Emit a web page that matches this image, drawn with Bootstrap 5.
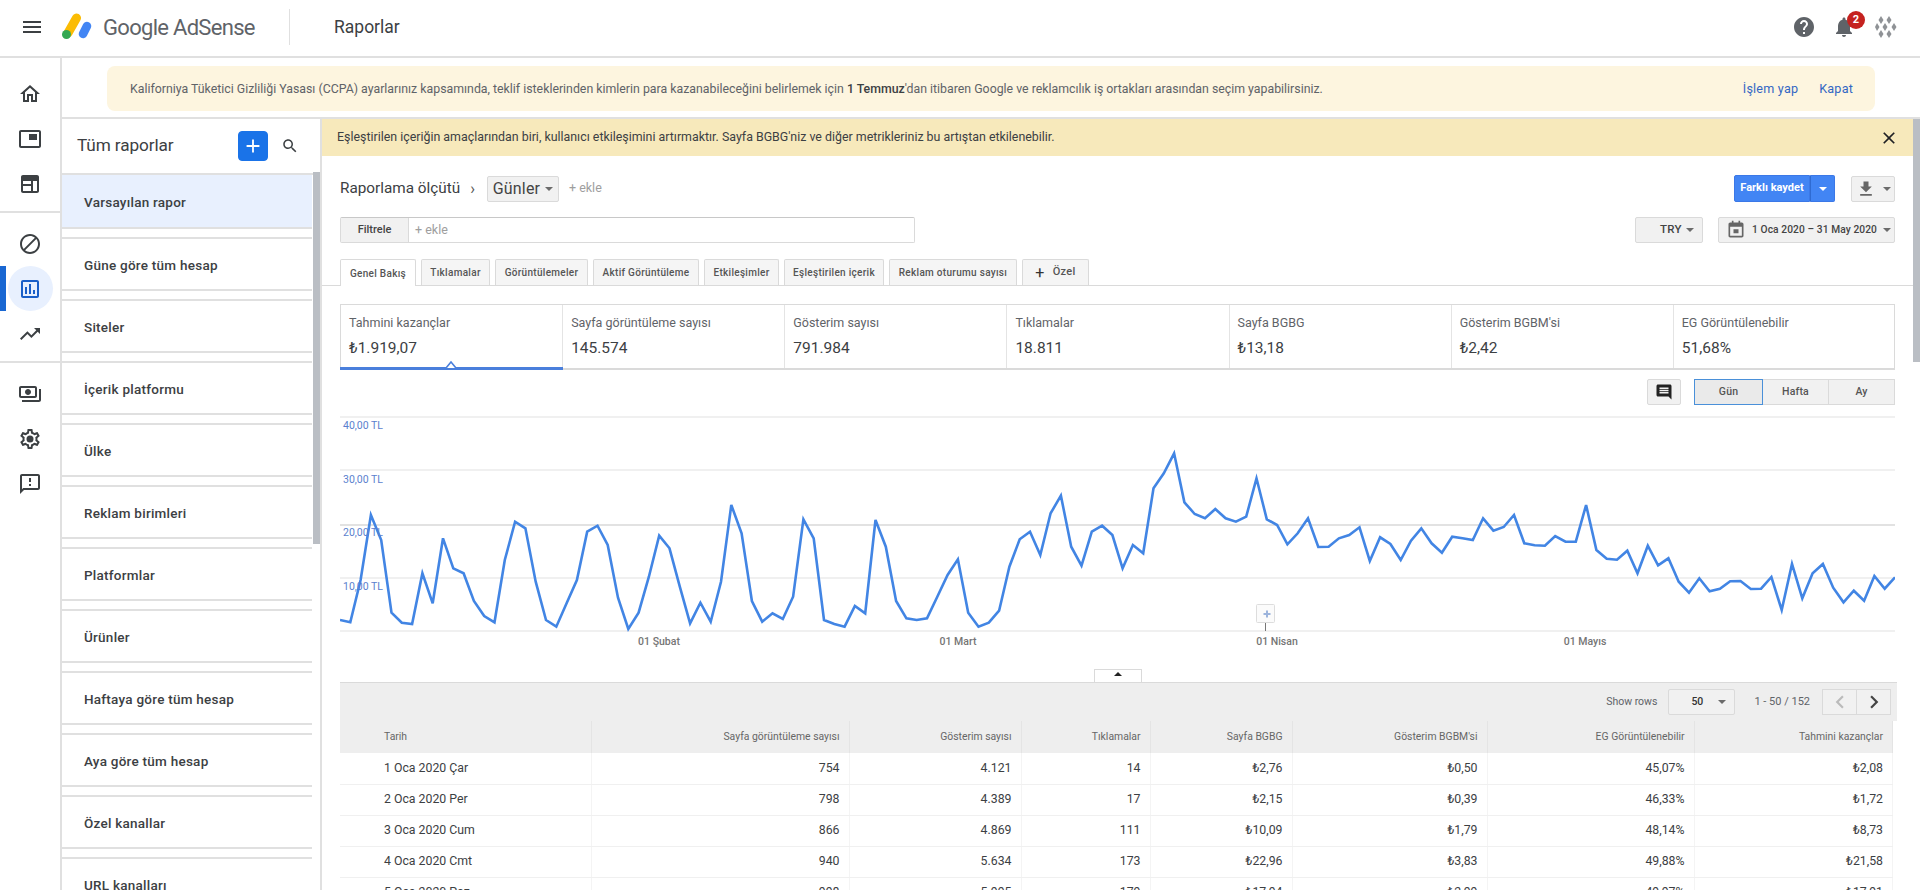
<!DOCTYPE html>
<html lang="tr">
<head>
  <meta charset="UTF-8">
  <meta name="viewport" content="width=device-width, initial-scale=1">
  <title>Google AdSense - Raporlar</title>

  <link href="https://cdn.jsdelivr.net/npm/bootstrap@5.3.2/dist/css/bootstrap.min.css" rel="stylesheet">

  <style>
    html, body { height: 890px; overflow: hidden; }
    body { font-family: Roboto, "Liberation Sans", sans-serif; color: #3c4043; background: #fff; font-size: 13px; }
    svg { display: block; fill: currentColor; }

    .top-bar { height: 58px; padding: 0 23px 2px 20px; border-bottom: 2px solid #e0e0e0; flex-wrap: nowrap; justify-content: flex-start; }
    .menu-ico { width: 24px; height: 24px; color: #3c4043; }
    .ad-logo { width: 30px; height: 30px; margin-left: 18px; fill: none; margin-top: 1px; }
    .ad-name { font-size: 22px; color: #5f6368; margin-left: 11px; letter-spacing: -.7px; white-space: nowrap; width: 164px; }
    .top-sep { width: 1px; height: 36px; background: #e0e0e0; margin: 0 44px 0 22px; }
    .top-title { font-size: 17.5px; color: #3c4043; }
    .help-ico { width: 24px; height: 24px; color: #5f6368; }
    .bell-box { margin-left: 16px; position: relative; color: #5f6368; }
    .bell-ico { width: 24px; height: 24px; }
    .bell-count { position: absolute; top: -4px; right: -9px; width: 18px; height: 18px; border-radius: 50%; background: #c5221f; color: #fff; font-size: 11px; font-weight: 700; line-height: 18px; text-align: center; }
    .avatar-ico { width: 22px; height: 22px; margin-left: 19px; color: #8f9296; }

    .page-body { height: 832px; }
    .side-rail { width: 62px; flex: none; border-right: 2px solid #e0e0e0; }
    .rail-group { padding: 13px 0 5px; border-bottom: 2px solid #e0e0e0; }
    .rail-group + .rail-group { padding-top: 8px; }
    .rail-group:last-child { border-bottom: 0; }
    .rail-item { height: 45px; display: flex; align-items: center; justify-content: center; color: #3c4043; position: relative; width: 60px; }
    .rail-item svg { width: 24px; height: 24px; }
    .rail-item.is-on { color: #1a5fc8; }
    .rail-item.is-on::before { content: ""; position: absolute; left: 0; top: 0; bottom: 0; width: 6px; background: #1967d2; }
    .rail-item.is-on::after { content: ""; position: absolute; left: 8px; top: 0; width: 45px; height: 45px; border-radius: 50%; background: #e8f0fe; z-index: 0; }
    .rail-item.is-on svg { position: relative; z-index: 1; }

    .body-right { min-width: 0; }
    .ccpa-wrap { height: 61px; padding: 8px 45px 0; border-bottom: 2px solid #e0e0e0; flex: none; }
    .ccpa-box { height: 45px; background: #fdf5df; border-radius: 8px; padding: 1px 22px 0 23px; font-size: 12.33px; color: #5f6368; }
    .ccpa-box b { font-weight: 500; color: #3c4043; }
    .ccpa-link { color: #3367c4; font-size: 12.6px; letter-spacing: .2px; text-decoration: none; margin-left: 21px; }
    .ccpa-link:first-of-type { margin-left: 0; }

    .work-area { min-height: 0; }
    .report-panel { width: 260px; flex: none; border-right: 2px solid #e0e0e0; position: relative; overflow: hidden; }
    .panel-head { height: 56px; padding: 0 21px 0 15px; border-bottom: 2px solid #e0e0e0; }
    .panel-title { font-size: 17.2px; color: #3c4043; letter-spacing: -.1px; }
    .add-btn { width: 30px; height: 30px; padding: 0; background: #1a73e8; border-color: #1a73e8; color: #fff; border-radius: 4px; display: flex; align-items: center; justify-content: center; margin-left: auto; }
    .add-btn svg { width: 22px; height: 22px; }
    .search-ico { width: 18px; height: 18px; margin-left: 13px; color: #3c4043; }
    .report-list { padding-right: 8px; }
    .report-row { height: 54px; padding: 3px 22px 0; margin-bottom: 8px; display: flex; align-items: center; border-bottom: 2px solid #e0e0e0; border-top: 2px solid #e0e0e0; font-size: 13.5px; font-weight: 500; color: #3c4043; letter-spacing: .25px; }
    .report-row:first-child { background: #e8f0fe; border-top: 0; }
    .panel-scroll { position: absolute; right: 0; top: 53px; width: 7px; height: 372px; background: #babec4; }

    .report-main { min-width: 0; position: relative; overflow: hidden; }
    .main-scroll { position: absolute; top: 0; right: 0; width: 7px; height: 243px; background: #babec4; }
    .tip-bar { height: 37px; background: #f7e9bb; margin-right: 7px; padding: 0 14px 0 15px; font-size: 12.4px; color: #3c4043; }
    .tip-bar svg { width: 20px; height: 20px; margin-left: auto; color: #202124; }

    .report-inner { padding: 19px 25px 0 18px; }
    .gray-btn { background: #f1f1f1; border: 1px solid #dadada; border-radius: 2px; color: #444; font-size: 11px; font-weight: 500; padding: 0; height: 26px; display: inline-flex; align-items: center; justify-content: center; letter-spacing: .2px; white-space: nowrap; }
    .gray-btn:hover { background: #f1f1f1; border-color: #dadada; color: #444; }
    .caret-mini { width: 0; height: 0; border: 4px solid transparent; border-top-color: #6b6b6b; border-bottom: 0; display: inline-block; }
    .by-label { font-size: 15.3px; color: #3c4043; }
    .by-chevron { font-size: 16px; color: #555; margin: 0 12px 0 10px; line-height: 1; }
    .days-btn { width: 72px; font-size: 16px; font-weight: 400; gap: 5px; color: #444; }
    .add-hint { color: #9e9e9e; font-size: 12.5px; margin-left: 10px; }
    .save-group { margin-left: auto; }
    .save-main { width: 76px; height: 27px; background: #4285f4; color: #fff; font-size: 11px; font-weight: 700; border: 1px solid #3b78e7; border-radius: 2px 0 0 2px; padding: 0; white-space: nowrap; }
    .save-drop { width: 25px; height: 27px; background: #4285f4; border: 1px solid #3b78e7; border-left-color: #2f6bd2; border-radius: 0 2px 2px 0; padding: 0; display: flex; align-items: center; justify-content: center; }
    .save-drop .caret-mini { border-top-color: #fff; }
    .down-btn { width: 44px; margin-left: 16px; gap: 7px; }
    .down-btn svg { width: 20px; height: 20px; color: #666; }

    .filter-row { margin-top: 15px; }
    .filter-box { width: 575px; height: 26px; border: 1px solid #dadada; border-top-color: #c8c8c8; border-radius: 2px; }
    .filter-name { width: 68px; background: #f1f1f1; border-right: 1px solid #dadada; font-size: 11px; font-weight: 500; color: #444; }
    .filter-add { padding-left: 6px; color: #9e9e9e; font-size: 12.5px; }
    .cur-btn { width: 68px; margin-left: auto; padding: 0 8px 0 24px; justify-content: space-between; font-size: 11.5px; }
    .date-btn { width: 177px; margin-left: 15px; padding-left: 7px; gap: 6px; justify-content: flex-start; font-size: 10.2px; letter-spacing: .1px; font-weight: 500; }
    .date-btn svg { width: 20px; height: 20px; color: #666; }

    .tab-strip { height: 26px; margin: 16px -25px 0 -18px; padding-left: 18px; border-bottom: 1px solid #dadada; gap: 5px; box-sizing: content-box; }
    .tab-item { height: 26px; background: #f5f5f5; border: 1px solid #dadada; border-bottom: 0; border-radius: 2px 2px 0 0; font-size: 10px; font-weight: 500; color: #555; letter-spacing: .3px; display: flex; align-items: center; justify-content: center; }
    .tab-item.is-on { background: #fff; height: 27px; margin-bottom: -1px; }
    .tw1 { width: 76px; } .tw2 { width: 69px; } .tw3 { width: 93px; } .tw4 { width: 106px; } .tw5 { width: 75px; } .tw6 { width: 100px; } .tw7 { width: 128px; } .tw8 { width: 67px; gap: 8px; font-size: 11px; }
    .plus-glyph { font-size: 16px; color: #333; font-weight: 400; line-height: 1; }

    .score-strip { margin-top: 18px; height: 66px; border: 1px solid #dadada; border-bottom-width: 2px; width: 1555px; }
    .score-cell { width: 222.14px; flex: none; padding: 9px 8px 0 8px; border-right: 1px solid #e4e4e4; position: relative; }
    .score-cell:last-child { border-right: 0; }
    .score-cell.is-on::after { content: ""; position: absolute; left: -1px; right: -1px; bottom: -2px; height: 3px; background: #4a7fdc; }
    .score-notch { position: absolute; left: 105px; bottom: 0; width: 10px; height: 10px; fill: #fff; stroke: #4a7fdc; stroke-width: 1.6; z-index: 1; }
    .score-name { font-size: 12.5px; color: #5f6368; line-height: 18px; }
    .score-val { font-size: 15.5px; color: #3c4043; margin-top: 6px; line-height: 20px; }

    .range-row { margin-top: 9px; height: 26px; width: 1555px; justify-content: flex-end; }
    .note-btn { width: 34px; margin-right: 14px; }
    .note-btn svg { width: 18px; height: 18px; color: #222; }
    .range-btn { width: 67px; border-radius: 0; margin-left: -1px; font-size: 10.5px; color: #555; }
    .range-btn.is-on { background: #eaeaea; border-color: #4a90d9; position: relative; z-index: 1; width: 69px; }

    .chart-svg { margin-top: 11px; width: 1555px; height: 236px; }
    .chart-svg text { font-family: Roboto, "Liberation Sans", sans-serif; }

    .collapse-tab { width: 48px; height: 13px; margin: 17px 0 0 754px; background: #fff; border: 1px solid #dadada; border-bottom: 0; display: flex; justify-content: center; padding-top: 2px; }
    .collapse-tab i { width: 0; height: 0; border: 4px solid transparent; border-bottom: 4px solid #222; border-top: 0; display: block; }
    .data-wrap { width: 1557px; border-top: 1px solid #dadada; }
    .tool-row { height: 38px; background: #eee; padding-right: 6px; font-size: 10.5px; color: #5f6368; }
    .rows-select { width: 67px; height: 26px; background: #f1f1f1; border: 1px solid #dadada; border-radius: 2px; margin-left: 11px; padding: 0 8px 0 22px; font-weight: 500; color: #333; justify-content: space-between; }
    .pager-text { margin-left: 19px; font-size: 11px; }
    .pager-group { margin-left: 13px; }
    .pager-btn { width: 35px; height: 26px; background: #f1f1f1; border: 1px solid #dadada; display: flex; align-items: center; justify-content: center; margin-left: -1px; color: #444; }
    .pager-btn svg { width: 26px; height: 26px; }
    .pager-btn.is-off { color: #bbb; }

    .data-table { table-layout: fixed; width: 1553px; margin: 0; font-size: 12.3px; color: #3c4043; }
    .data-table > :not(caption) > * > * { padding: 0 9px; height: 31px; vertical-align: middle; border-bottom: 1px solid #f0f0f0; border-right: 1px solid #f4f4f4; text-align: right; background: transparent; color: #3c4043; box-shadow: none; }
    .data-table th { background: #eee !important; font-size: 10.4px; font-weight: 400; height: 32px !important; color: #666 !important; border-right-color: #e4e4e4 !important; border-bottom: 0 !important; }
    .data-table .day-cell { text-align: left; padding-left: 44px; }
    .cw1 { width: 251px; } .cw2 { width: 258px; } .cw3 { width: 172px; } .cw4 { width: 129px; } .cw5 { width: 142px; } .cw6 { width: 195px; } .cw7 { width: 207px; }
  </style>
</head>

<body>

  <nav class="navbar top-bar bg-white">
    <svg class="menu-ico" viewBox="0 0 24 24"><path d="M3 18h18v-2H3v2zm0-5h18v-2H3v2zm0-7v2h18V6H3z"/></svg>
    <svg class="ad-logo" viewBox="0 0 30 30">
      <line x1="6" y1="20" x2="14.5" y2="5" stroke="#fbbc04" stroke-width="9" stroke-linecap="round"/>
      <line x1="21" y1="21" x2="25" y2="13" stroke="#4285f4" stroke-width="8.5" stroke-linecap="round"/>
      <circle cx="4.5" cy="21.5" r="4.5" fill="#34a853"/>
    </svg>
    <span class="ad-name">Google AdSense</span>
    <span class="top-sep"></span>
    <span class="top-title">Raporlar</span>
    <div class="ms-auto d-flex align-items-center">
      <svg class="help-ico" viewBox="0 0 24 24"><path d="M12 2C6.48 2 2 6.48 2 12s4.48 10 10 10 10-4.48 10-10S17.52 2 12 2zm1 17h-2v-2h2v2zm2.07-7.75l-.9.92C13.45 12.9 13 13.5 13 15h-2v-.5c0-1.1.45-2.1 1.17-2.83l1.24-1.26c.37-.36.59-.86.59-1.41 0-1.1-.9-2-2-2s-2 .9-2 2H8c0-2.21 1.79-4 4-4s4 1.79 4 4c0 .88-.36 1.68-.93 2.25z"/></svg>
      <div class="bell-box">
        <svg class="bell-ico" viewBox="0 0 24 24"><path d="M12 22c1.1 0 2-.9 2-2h-4c0 1.1.89 2 2 2zm6-6v-5c0-3.07-1.64-5.64-4.5-6.32V4c0-.83-.67-1.5-1.5-1.5s-1.5.67-1.5 1.5v.68C7.63 5.36 6 7.92 6 11v5l-2 2v1h16v-1l-2-2z"/></svg>
        <span class="bell-count">2</span>
      </div>
      <svg class="avatar-ico" viewBox="0 0 22 22">
        <path d="M6 0l2.5 4L6 8 3.5 4zM14 0l2.5 4L14 8l-2.5-4zM2 7l2.5 4L2 15l-2-4zM10 7l2.5 4L10 15l-2.5-4zM19 7l2.5 4L19 15l-2.5-4zM6 14l2.5 4L6 22l-2.5-4zM14 14l2.5 4L14 22l-2.5-4z"/>
      </svg>
    </div>
  </nav>

  <div class="d-flex page-body">
    <aside class="side-rail">
      <div class="rail-group">
        <div class="rail-item"><svg viewBox="0 0 24 24"><path d="M12 5.69l5 4.5V18h-2v-6H9v6H7v-7.81l5-4.5M12 3L2 12h3v8h6v-6h2v6h6v-8h3L12 3z"/></svg></div>
        <div class="rail-item"><svg viewBox="0 0 24 24"><path d="M19 7h-8v6h8V7zm2-4H3c-1.1 0-2 .9-2 2v14c0 1.1.9 1.98 2 1.98h18c1.1 0 2-.88 2-1.98V5c0-1.1-.9-2-2-2zm0 16.01H3V4.98h18v14.03z"/></svg></div>
        <div class="rail-item"><svg viewBox="0 0 24 24"><path d="M19 3H5c-1.1 0-2 .9-2 2v14c0 1.1.9 2 2 2h14c1.1 0 2-.9 2-2V5c0-1.1-.9-2-2-2zM5 19v-5h8v5H5zm8-7H5V9h8v3zm6 7h-4V9h4v10z"/></svg></div>
      </div>
      <div class="rail-group">
        <div class="rail-item"><svg viewBox="0 0 24 24"><path d="M12 2C6.48 2 2 6.48 2 12s4.48 10 10 10 10-4.48 10-10S17.52 2 12 2zM4 12c0-4.42 3.58-8 8-8 1.85 0 3.55.63 4.9 1.69L5.69 16.9C4.63 15.55 4 13.85 4 12zm8 8c-1.85 0-3.55-.63-4.9-1.69L18.31 7.1C19.37 8.45 20 10.15 20 12c0 4.42-3.58 8-8 8z"/></svg></div>
        <div class="rail-item is-on"><svg viewBox="0 0 24 24"><path d="M19 3H5c-1.1 0-2 .9-2 2v14c0 1.1.9 2 2 2h14c1.1 0 2-.9 2-2V5c0-1.1-.9-2-2-2zm0 16H5V5h14v14zM7 10h2v7H7zm4-3h2v10h-2zm4 6h2v4h-2z"/></svg></div>
        <div class="rail-item"><svg viewBox="0 0 24 24"><path d="M16 6l2.29 2.29-4.88 4.88-4-4L2 16.59 3.41 18l6-6 4 4 6.3-6.29L22 12V6z"/></svg></div>
      </div>
      <div class="rail-group">
        <div class="rail-item"><svg viewBox="0 0 24 24"><path d="M19 14V6c0-1.1-.9-2-2-2H3c-1.1 0-2 .9-2 2v8c0 1.1.9 2 2 2h14c1.1 0 2-.9 2-2zm-2 0H3V6h14v8zm-7-7c-1.66 0-3 1.34-3 3s1.34 3 3 3 3-1.34 3-3-1.34-3-3-3zm13 0v11c0 1.1-.9 2-2 2H4v-2h17V7h2z"/></svg></div>
        <div class="rail-item"><svg viewBox="0 0 24 24"><path d="M19.43 12.98c.04-.32.07-.64.07-.98 0-.34-.03-.66-.07-.98l2.11-1.65c.19-.15.24-.42.12-.64l-2-3.46c-.09-.16-.26-.25-.44-.25-.06 0-.12.01-.17.03l-2.49 1c-.52-.4-1.08-.73-1.69-.98l-.38-2.65C14.46 2.18 14.25 2 14 2h-4c-.25 0-.46.18-.49.42l-.38 2.65c-.61.25-1.17.59-1.69.98l-2.49-1c-.06-.02-.12-.03-.18-.03-.17 0-.34.09-.43.25l-2 3.46c-.13.22-.07.49.12.64l2.11 1.65c-.04.32-.07.65-.07.98 0 .33.03.66.07.98l-2.11 1.65c-.19.15-.24.42-.12.64l2 3.46c.09.16.26.25.44.25.06 0 .12-.01.17-.03l2.49-1c.52.4 1.08.73 1.69.98l.38 2.65c.03.24.24.42.49.42h4c.25 0 .46-.18.49-.42l.38-2.65c.61-.25 1.17-.59 1.69-.98l2.49 1c.06.02.12.03.18.03.17 0 .34-.09.43-.25l2-3.46c.12-.22.07-.49-.12-.64l-2.11-1.65zm-1.98-1.71c.04.31.05.52.05.73 0 .21-.02.43-.05.73l-.14 1.13.89.7 1.08.84-.7 1.21-1.27-.51-1.04-.42-.9.68c-.43.32-.84.56-1.25.73l-1.06.43-.16 1.13-.2 1.35h-1.4l-.19-1.35-.16-1.13-1.06-.43c-.43-.18-.83-.41-1.23-.71l-.91-.7-1.06.43-1.27.51-.7-1.21 1.08-.84.89-.7-.14-1.13c-.03-.31-.05-.54-.05-.74s.02-.43.05-.73l.14-1.13-.89-.7-1.08-.84.7-1.21 1.27.51 1.04.42.9-.68c.43-.32.84-.56 1.25-.73l1.06-.43.16-1.13.2-1.35h1.39l.19 1.35.16 1.13 1.06.43c.43.18.83.41 1.23.71l.91.7 1.06-.43 1.27-.51.7 1.21-1.07.85-.89.7.14 1.13z"/><circle cx="12" cy="12" r="3.5"/></svg></div>
        <div class="rail-item"><svg viewBox="0 0 24 24"><path d="M20 2H4c-1.1 0-1.99.9-1.99 2L2 22l4-4h14c1.1 0 2-.9 2-2V4c0-1.1-.9-2-2-2zm0 14H5.17L4 17.17V4h16v12zM11 12h2v2h-2zm0-6h2v4h-2z"/></svg></div>
      </div>
    </aside>

    <div class="body-right flex-grow-1 d-flex flex-column">
      <div class="ccpa-wrap">
        <div class="ccpa-box d-flex align-items-center">
          <span>Kaliforniya Tüketici Gizliliği Yasası (CCPA) ayarlarınız kapsamında, teklif isteklerinden kimlerin para kazanabileceğini belirlemek için <b>1 Temmuz</b>'dan itibaren Google ve reklamcılık iş ortakları arasından seçim yapabilirsiniz.</span>
          <a class="ccpa-link ms-auto" href="#">İşlem yap</a>
          <a class="ccpa-link" href="#">Kapat</a>
        </div>
      </div>

      <div class="work-area d-flex flex-grow-1">
        <section class="report-panel">
          <div class="panel-head d-flex align-items-center">
            <span class="panel-title">Tüm raporlar</span>
            <button class="btn add-btn"><svg viewBox="0 0 24 24"><path d="M19 13h-6v6h-2v-6H5v-2h6V5h2v6h6v2z"/></svg></button>
            <svg class="search-ico" viewBox="0 0 24 24"><path d="M15.5 14h-.79l-.28-.27C15.41 12.59 16 11.11 16 9.5 16 5.91 13.09 3 9.5 3S3 5.91 3 9.5 5.91 16 9.5 16c1.61 0 3.09-.59 4.23-1.57l.27.28v.79l5 4.99L20.49 19l-4.99-5zm-6 0C7.01 14 5 11.99 5 9.5S7.01 5 9.5 5 14 7.01 14 9.5 11.99 14 9.5 14z"/></svg>
          </div>
          <div class="report-list" id="reportList"></div>
          <div class="panel-scroll"></div>
        </section>

        <main class="report-main flex-grow-1">
          <div class="main-scroll"></div>
          <div class="tip-bar d-flex align-items-center">
            <span>Eşleştirilen içeriğin amaçlarından biri, kullanıcı etkileşimini artırmaktır. Sayfa BGBG'niz ve diğer metrikleriniz bu artıştan etkilenebilir.</span>
            <svg viewBox="0 0 24 24"><path d="M19 6.41L17.59 5 12 10.59 6.41 5 5 6.41 10.59 12 5 17.59 6.41 19 12 13.41 17.59 19 19 17.59 13.41 12z"/></svg>
          </div>

          <div class="report-inner">
            <div class="d-flex align-items-center">
              <span class="by-label">Raporlama ölçütü</span>
              <span class="by-chevron">›</span>
              <button class="btn gray-btn days-btn">Günler <i class="caret-mini"></i></button>
              <span class="add-hint">+ ekle</span>
              <div class="save-group d-flex">
                <button class="btn save-main">Farklı kaydet</button>
                <button class="btn save-drop"><i class="caret-mini"></i></button>
              </div>
              <button class="btn gray-btn down-btn"><svg viewBox="0 0 24 24"><path d="M19 9h-4V3H9v6H5l7 7 7-7zM5 18v2h14v-2H5z"/></svg><i class="caret-mini"></i></button>
            </div>

            <div class="filter-row d-flex align-items-center">
              <div class="filter-box d-flex">
                <span class="filter-name d-flex align-items-center justify-content-center">Filtrele</span>
                <span class="filter-add d-flex align-items-center">+ ekle</span>
              </div>
              <button class="btn gray-btn cur-btn">TRY <i class="caret-mini"></i></button>
              <button class="btn gray-btn date-btn"><svg viewBox="0 0 24 24"><path d="M9 11h6v5H9zM17 3V1h-2v2H9V1H7v2H5c-1.1 0-2 .9-2 2v14c0 1.1.9 2 2 2h14c1.1 0 2-.9 2-2V5c0-1.1-.9-2-2-2h-2zm2 16H5V8h14v11z"/></svg>1 Oca 2020 – 31 May 2020 <i class="caret-mini"></i></button>
            </div>

            <div class="tab-strip d-flex">
              <div class="tab-item tw1 is-on">Genel Bakış</div>
              <div class="tab-item tw2">Tıklamalar</div>
              <div class="tab-item tw3">Görüntülemeler</div>
              <div class="tab-item tw4">Aktif Görüntüleme</div>
              <div class="tab-item tw5">Etkileşimler</div>
              <div class="tab-item tw6">Eşleştirilen içerik</div>
              <div class="tab-item tw7">Reklam oturumu sayısı</div>
              <div class="tab-item tw8"><span class="plus-glyph">+</span> Özel</div>
            </div>

            <div class="score-strip d-flex">
              <div class="score-cell is-on">
                <div class="score-name">Tahmini kazançlar</div>
                <div class="score-val">₺1.919,07</div>
                <svg class="score-notch" viewBox="0 0 10 10"><path d="M0 10L5 4l5 6"/></svg>
              </div>
              <div class="score-cell"><div class="score-name">Sayfa görüntüleme sayısı</div><div class="score-val">145.574</div></div>
              <div class="score-cell"><div class="score-name">Gösterim sayısı</div><div class="score-val">791.984</div></div>
              <div class="score-cell"><div class="score-name">Tıklamalar</div><div class="score-val">18.811</div></div>
              <div class="score-cell"><div class="score-name">Sayfa BGBG</div><div class="score-val">₺13,18</div></div>
              <div class="score-cell"><div class="score-name">Gösterim BGBM'si</div><div class="score-val">₺2,42</div></div>
              <div class="score-cell"><div class="score-name">EG Görüntülenebilir</div><div class="score-val">51,68%</div></div>
            </div>

            <div class="range-row d-flex">
              <button class="btn gray-btn note-btn"><svg viewBox="0 0 24 24"><path d="M21.99 4c0-1.1-.89-2-1.99-2H4c-1.1 0-2 .9-2 2v12c0 1.1.9 2 2 2h14l4 4-.01-18zM18 14H6v-2h12v2zm0-3H6V9h12v2zm0-3H6V6h12v2z"/></svg></button>
              <button class="btn gray-btn range-btn is-on">Gün</button>
              <button class="btn gray-btn range-btn">Hafta</button>
              <button class="btn gray-btn range-btn">Ay</button>
            </div>

            <svg class="chart-svg" id="chart" viewBox="0 0 1555 236" fill="none"></svg>

            <div class="collapse-tab"><i></i></div>
            <div class="data-wrap">
              <div class="tool-row d-flex align-items-center justify-content-end">
                <span>Show rows</span>
                <span class="rows-select d-flex align-items-center">50 <i class="caret-mini"></i></span>
                <span class="pager-text">1 - 50 / 152</span>
                <div class="pager-group d-flex">
                  <div class="pager-btn is-off"><svg viewBox="0 0 24 24"><path d="M15.41 7.41L14 6l-6 6 6 6 1.41-1.41L10.83 12z"/></svg></div>
                  <div class="pager-btn"><svg viewBox="0 0 24 24"><path d="M10 6L8.59 7.41 13.17 12l-4.58 4.59L10 18l6-6z"/></svg></div>
                </div>
              </div>
              <table class="table data-table">
                <colgroup>
                  <col class="cw1"><col class="cw2"><col class="cw3"><col class="cw4"><col class="cw5"><col class="cw6"><col class="cw7"><col>
                </colgroup>
                <thead>
                  <tr>
                    <th class="day-cell">Tarih</th><th>Sayfa görüntüleme sayısı</th><th>Gösterim sayısı</th><th>Tıklamalar</th><th>Sayfa BGBG</th><th>Gösterim BGBM'si</th><th>EG Görüntülenebilir</th><th>Tahmini kazançlar</th>
                  </tr>
                </thead>
                <tbody id="rows"></tbody>
              </table>
            </div>
          </div>
        </main>
      </div>
    </div>
  </div>

  <script src="https://cdn.jsdelivr.net/npm/bootstrap@5.3.2/dist/js/bootstrap.bundle.min.js"></script>

  <script>
    const reports = ['Varsayılan rapor', 'Güne göre tüm hesap', 'Siteler', 'İçerik platformu', 'Ülke', 'Reklam birimleri', 'Platformlar', 'Ürünler', 'Haftaya göre tüm hesap', 'Aya göre tüm hesap', 'Özel kanallar', 'URL kanalları'];
    document.getElementById('reportList').innerHTML = reports.map(r => `<div class="report-row">${r}</div>`).join('');

    const rows = [
      ['1 Oca 2020 Çar', '754', '4.121', '14', '₺2,76', '₺0,50', '45,07%', '₺2,08'],
      ['2 Oca 2020 Per', '798', '4.389', '17', '₺2,15', '₺0,39', '46,33%', '₺1,72'],
      ['3 Oca 2020 Cum', '866', '4.869', '111', '₺10,09', '₺1,79', '48,14%', '₺8,73'],
      ['4 Oca 2020 Cmt', '940', '5.634', '173', '₺22,96', '₺3,83', '49,88%', '₺21,58'],
      ['5 Oca 2020 Paz', '998', '5.995', '179', '₺17,94', '₺2,99', '49,97%', '₺17,91']
    ];
    document.getElementById('rows').innerHTML = rows.map(r =>
      '<tr>' + r.map((c, i) => `<td${i ? '' : ' class="day-cell"'}>${c}</td>`).join('') + '</tr>').join('');

    // chart values are read off the picture: (page y - 400) * 3
    const vals = [660,667,540,345,420,638,668,672,520,610,415,505,520,603,648,667,480,365,385,545,660,680,610,540,395,377,435,593,687,638,530,407,445,560,670,608,665,545,315,400,603,665,640,657,590,358,415,660,672,680,618,640,360,440,603,655,660,655,590,525,478,638,680,668,632,500,418,395,465,340,287,440,497,395,377,405,505,435,460,265,220,160,307,342,355,327,355,365,350,235,358,375,433,400,355,441,440,415,405,382,483,412,432,480,422,385,430,458,410,415,420,355,392,381,345,430,436,437,408,425,425,315,450,476,479,452,520,437,496,475,545,578,535,574,566,544,543,567,566,531,630,492,595,520,492,563,607,572,602,528,566,532];
    const chartTop = 416;   // page y of the svg
    const step = 1555 / (vals.length - 1);
    const pts = vals.map((v, i) => `${(i * step).toFixed(1)},${(400 + v / 3 - chartTop).toFixed(1)}`).join(' ');

    let svg = '';
    [1, 54, 109, 162, 215].forEach((y, i) => {
      svg += `<line x1="0" x2="1555" y1="${y}" y2="${y}" stroke="#e2e2e2" stroke-width="${i === 2 ? 2 : 1.2}"/>`;
    });
    svg += `<polyline points="${pts}" fill="none" stroke="#4285e4" stroke-width="2.6" stroke-linejoin="miter"/>`;
    ['40,00 TL', '30,00 TL', '20,00 TL', '10,00 TL'].forEach((t, i) => {
      svg += `<text x="3" y="${13 + i * 53.5}" font-size="10.5" style="fill:#5b7fce">${t}</text>`;
    });
    [['01 Şubat', 319], ['01 Mart', 618], ['01 Nisan', 937], ['01 Mayıs', 1245]].forEach(t => {
      svg += `<text x="${t[1]}" y="229" font-size="10.5" font-weight="500" text-anchor="middle" style="fill:#757575">${t[0]}</text>`;
    });
    svg += `<rect x="916.5" y="188.5" width="18" height="18" rx="1" fill="#fbfbfb" stroke="#ddd"/>`;
    svg += `<path d="M923.5 197h2.5v-2.5h2V197h2.5v2H928v2.5h-2V199h-2.5z" style="fill:#9cb4dc"/>`;
    svg += `<line x1="925.5" x2="925.5" y1="207" y2="215" stroke="#777"/>`;
    document.getElementById('chart').innerHTML = svg;
  </script>

</body>
</html>
